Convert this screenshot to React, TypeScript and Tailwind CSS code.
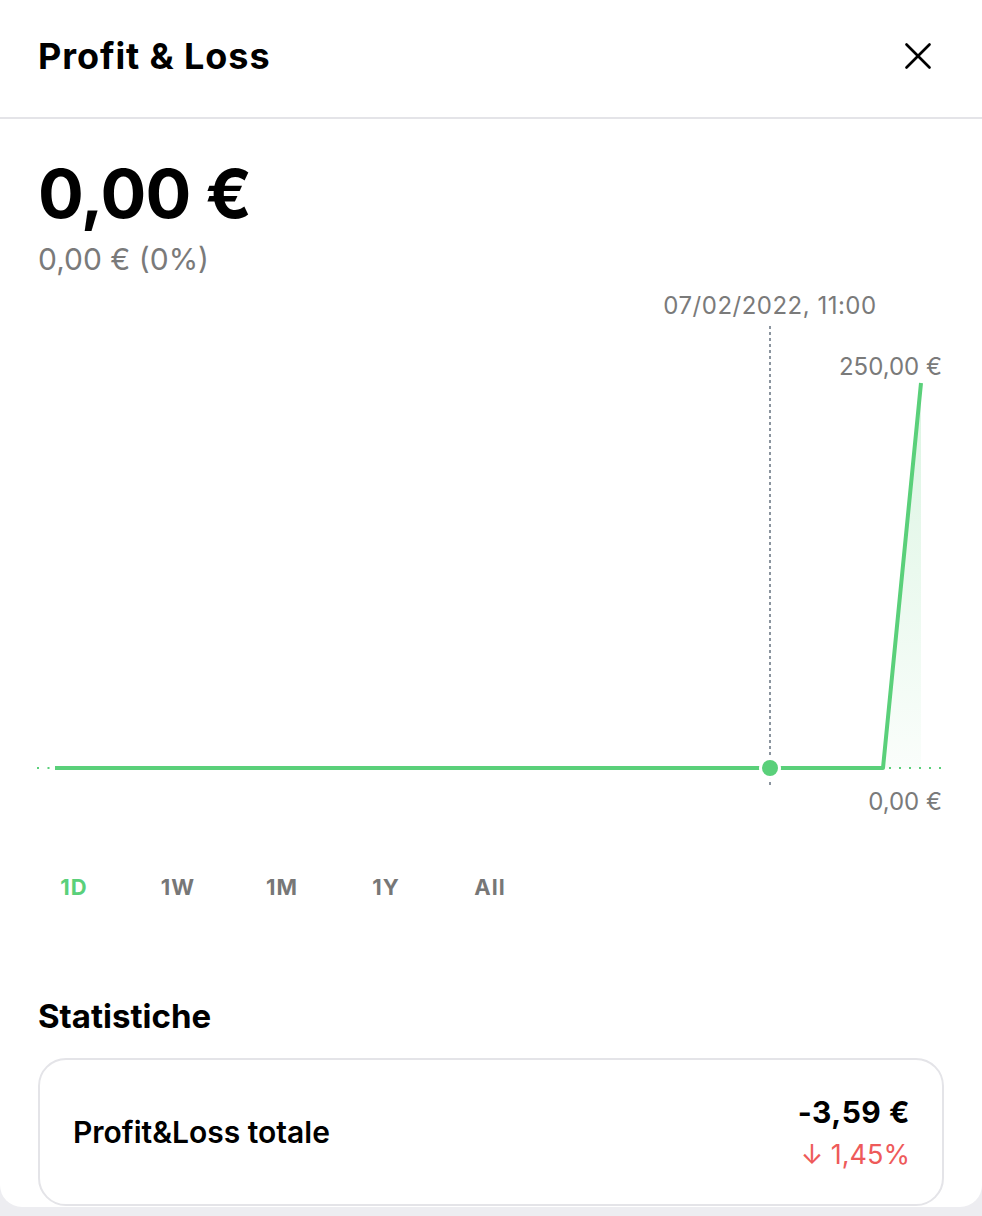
import { X } from 'lucide-react'

const tabs = ['1D', '1W', '1M', '1Y', 'All']

function Chart() {
  return (
    <div className="relative h-[540px] w-full">
      <svg className="absolute inset-0" width="982" height="540" viewBox="0 0 982 540">
        <defs>
          <linearGradient id="pnlFill" x1="0" y1="0" x2="0" y2="1">
            <stop offset="0%" stopColor="#5ad07a" stopOpacity="0.22" />
            <stop offset="100%" stopColor="#5ad07a" stopOpacity="0.03" />
          </linearGradient>
        </defs>
        <polygon points="883,487 921,102 921,487" fill="url(#pnlFill)" />
        <line x1="770" y1="45" x2="770" y2="505" stroke="#6f7b87" strokeWidth="1.6" strokeDasharray="3 3" />
        <line x1="37" y1="487" x2="52" y2="487" stroke="#5ad07a" strokeWidth="2" strokeDasharray="2 8.5" />
        <line x1="889" y1="487" x2="944" y2="487" stroke="#5ad07a" strokeWidth="2" strokeDasharray="2 8" />
        <polyline
          points="55,487 883,487 921,102"
          fill="none"
          stroke="#5ad07a"
          strokeWidth="4"
          strokeLinejoin="round"
        />
        <circle cx="770" cy="487" r="11" fill="#ffffff" />
        <circle cx="770" cy="487" r="8" fill="#5ad07a" />
      </svg>
      <div className="absolute left-[770px] top-[11px] -translate-x-1/2 whitespace-nowrap text-[24px] leading-7 tracking-[0.5px] text-[#7a7a7a]">
        07/02/2022, 11:00
      </div>
      <div className="absolute right-[40px] top-[72px] text-[24px] leading-7 text-[#7a7a7a]">250,00 €</div>
      <div className="absolute right-[40px] top-[507px] text-[24px] leading-7 text-[#7a7a7a]">0,00 €</div>
    </div>
  )
}

export default function App() {
  return (
    <div className="h-[1216px] w-[982px] overflow-hidden bg-[#ededf1] font-['Inter',sans-serif] text-black">
      <div className="flex h-[1207px] flex-col rounded-b-[22px] bg-white">
        <div className="flex h-[119px] shrink-0 items-center justify-between border-b-2 border-[#e4e4e8] pb-[6px] pl-[38px] pr-[41px]">
          <h1 className="text-[36px] font-bold tracking-[0.9px]">Profit &amp; Loss</h1>
          <X className="h-[46px] w-[46px]" strokeWidth={1.4} />
        </div>

        <div className="px-[38px] pt-[36px]">
          <div className="text-[68px] font-bold leading-[76px] tracking-[-1px]">0,00 €</div>
          <div className="mt-[10px] text-[30px] leading-9 text-[#7a7a7a]">0,00 € (0%)</div>
        </div>

        <div className="mt-[4px]">
          <Chart />
        </div>

        <div className="mt-[52px] flex pl-[22px]">
          {tabs.map((t, i) => (
            <div
              key={t}
              className={`w-[104px] text-center text-[22px] font-bold leading-7 tracking-[1px] ${
                i === 0 ? 'text-[#5ad07a]' : 'text-[#777777]'
              }`}
            >
              {t}
            </div>
          ))}
        </div>

        <div className="px-[38px] pt-[97px]">
          <h2 className="text-[33px] font-bold leading-9">Statistiche</h2>
          <div className="mt-[24px] flex h-[148px] items-center justify-between rounded-[28px] border-2 border-[#e4e4e8] pl-[33px] pr-[32px]">
            <span className="text-[30px] font-semibold">Profit&amp;Loss totale</span>
            <div className="flex flex-col items-end">
              <span className="text-[30px] font-bold leading-9 tracking-[0.5px]">-3,59 €</span>
              <span className="mt-[9px] text-[27px] leading-8 text-[#ee5a5a]">↓ 1,45%</span>
            </div>
          </div>
        </div>
      </div>
    </div>
  )
}
